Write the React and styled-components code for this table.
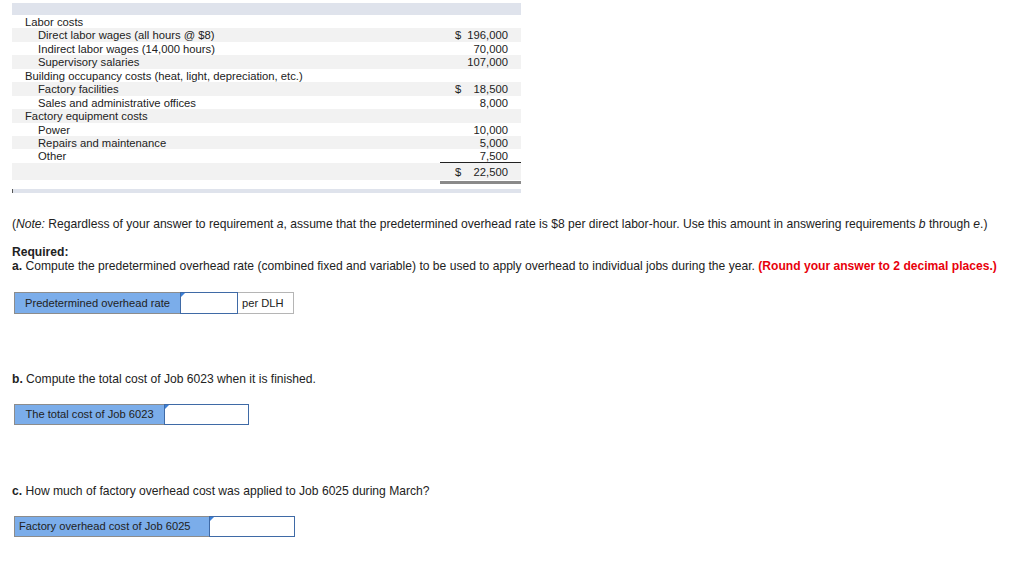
import React from 'react';
import styled, {createGlobalStyle} from 'styled-components';

const GlobalStyle = createGlobalStyle`
  body {
    margin: 0;
    background: #fff;
    font-family: "Liberation Sans", Arial, sans-serif;
    color: #222;
  }
`;

const Page = styled.div`
  padding: 3px 0 0 12px;
`;

const Table = styled.div`
  width: 509px;
  font-size: 11.25px;
`;

const HeaderBand = styled.div`
  height: 12px;
  background: #dfe3ec;
`;

const Row = styled.div`
  display: flex;
  box-sizing: border-box;
  height: ${props => props.tall ? '17px' : '13.45px'};
  padding-top: 1px;
  line-height: ${props => props.tall ? '16px' : '12.45px'};
  background: ${props => props.shade ? '#f2f2f2' : '#fff'};
`;

const Label = styled.div`
  flex: 1;
  padding-left: ${props => props.indent ? '26px' : '13px'};
  white-space: nowrap;
`;

const Amount = styled.div`
  width: 81px;
  display: flex;
  justify-content: space-between;
  padding: 0 13px 0 15px;
  box-sizing: border-box;
  border-bottom: ${props => props.rule ? '1px solid #222' : 'none'};
`;

const DoubleRule = styled.div`
  display: flex;
  justify-content: flex-end;
  padding-top: 1px;
  &::after {
    content: '';
    width: 81px;
    height: 3px;
    background: #8a8a8a;
  }
`;

const BottomBand = styled.div`
  margin-top: 5px;
  height: 4px;
  background: #dfe3ec;
  border-left: 1px solid #555;
`;

const Text = styled.p`
  margin: ${props => props.gap}px 0 0 0;
  font-size: 12.1px;
  line-height: 14px;
  white-space: nowrap;
`;

const Red = styled.b`
  color: #e8000b;
`;

const AnswerRow = styled.div`
  display: flex;
  margin: ${props => props.gap}px 0 0 2px;
  height: ${props => props.h}px;
  font-size: 11.15px;
`;

const AnswerLabel = styled.div`
  width: ${props => props.w}px;
  box-sizing: border-box;
  background: #7badea;
  border: 1px solid #8c8c8c;
  border-right: none;
  display: flex;
  align-items: center;
  justify-content: ${props => props.left ? 'flex-start' : 'center'};
  padding-left: ${props => props.left ? '4px' : '0'};
  white-space: nowrap;
`;

const Input = styled.div`
  position: relative;
  width: ${props => props.w}px;
  box-sizing: border-box;
  background: #fff;
  border: 1px solid #3f6aa6;
  &::before {
    content: '';
    position: absolute;
    top: 0;
    left: 0;
    border-top: 4px solid #3a7fd8;
    border-right: 4px solid transparent;
  }
`;

const Unit = styled.div`
  width: 56px;
  box-sizing: border-box;
  border: 1px solid #b5b5b5;
  border-left: none;
  display: flex;
  align-items: center;
  padding-left: 4px;
`;

const rows = [
  {label: 'Labor costs'},
  {label: 'Direct labor wages (all hours @ $8)', indent: true, sign: '$', value: '196,000'},
  {label: 'Indirect labor wages (14,000 hours)', indent: true, value: '70,000'},
  {label: 'Supervisory salaries', indent: true, value: '107,000'},
  {label: 'Building occupancy costs (heat, light, depreciation, etc.)'},
  {label: 'Factory facilities', indent: true, sign: '$', value: '18,500'},
  {label: 'Sales and administrative offices', indent: true, value: '8,000'},
  {label: 'Factory equipment costs'},
  {label: 'Power', indent: true, value: '10,000'},
  {label: 'Repairs and maintenance', indent: true, value: '5,000'},
  {label: 'Other', indent: true, value: '7,500', rule: true},
];

export default function App() {
  return (
    <Page>
      <GlobalStyle/>
      <Table>
        <HeaderBand/>
        {rows.map((row, index) => (
          <Row key={row.label} shade={index % 2 === 1}>
            <Label indent={row.indent}>{row.label}</Label>
            <Amount rule={row.rule}>
              <span>{row.sign}</span>
              <span>{row.value}</span>
            </Amount>
          </Row>
        ))}
        <Row tall shade>
          <Label/>
          <Amount>
            <span>$</span>
            <span>22,500</span>
          </Amount>
        </Row>
        <DoubleRule/>
        <BottomBand/>
      </Table>

      <Text gap={24}>
        (<i>Note:</i> Regardless of your answer to requirement <i>a</i>, assume that the predetermined overhead rate is $8 per direct labor-hour. Use this amount in answering requirements <i>b</i> through <i>e</i>.)
      </Text>
      <Text gap={14}><b>Required:</b></Text>
      <Text gap={0}>
        <b>a.</b> Compute the predetermined overhead rate (combined fixed and variable) to be used to apply overhead to individual jobs during the year. <Red>(Round your answer to 2 decimal places.)</Red>
      </Text>
      <AnswerRow gap={19} h={22}>
        <AnswerLabel w={166}>Predetermined overhead rate</AnswerLabel>
        <Input w={58}/>
        <Unit>per DLH</Unit>
      </AnswerRow>

      <Text gap={58}><b>b.</b> Compute the total cost of Job 6023 when it is finished.</Text>
      <AnswerRow gap={18} h={21}>
        <AnswerLabel w={150}>The total cost of Job 6023</AnswerLabel>
        <Input w={85}/>
      </AnswerRow>

      <Text gap={59}><b>c.</b> How much of factory overhead cost was applied to Job 6025 during March?</Text>
      <AnswerRow gap={18} h={21}>
        <AnswerLabel w={195} left>Factory overhead cost of Job 6025</AnswerLabel>
        <Input w={86}/>
      </AnswerRow>
    </Page>
  );
}
